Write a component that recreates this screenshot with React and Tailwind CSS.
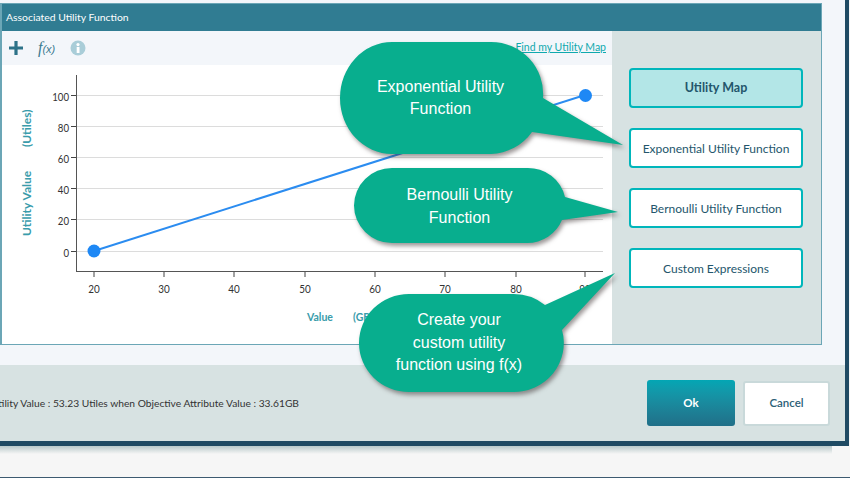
const font = { fontFamily: 'Lato, sans-serif' };

const yTicks = [
    { label: "100", y: 95.5 },
    { label: "80", y: 126.5 },
    { label: "60", y: 157.5 },
    { label: "40", y: 188.5 },
    { label: "20", y: 219.5 },
    { label: "0", y: 251.5 },
];

const xTicks = [
    { label: "20", x: 94 },
    { label: "30", x: 164 },
    { label: "40", x: 234 },
    { label: "50", x: 305 },
    { label: "60", x: 375 },
    { label: "70", x: 445 },
    { label: "80", x: 516 },
    { label: "90", x: 585 },
];

function Chart() {
    return (
        <svg width="610" height="279" viewBox="2 65 610 279" className="block" fontFamily="Lato, sans-serif">
            {yTicks.map((t) => (
                <g key={t.label}>
                    <line x1="77" x2="603" y1={t.y} y2={t.y} stroke="#dcdcdc" />
                    <line x1="71" x2="76" y1={t.y} y2={t.y} stroke="#444" />
                    <text
                        x="69"
                        y={t.y + 5}
                        fontSize="12"
                        textAnchor="end"
                        fill="#333"
                        textLength={t.label.length * 5.6}
                        lengthAdjust="spacingAndGlyphs"
                    >
                        {t.label}
                    </text>
                </g>
            ))}
            <line x1="76.5" x2="76.5" y1="75" y2="271" stroke="#555" />
            <line x1="76" x2="603" y1="271.5" y2="271.5" stroke="#555" />
            {xTicks.map((t) => (
                <g key={t.label}>
                    <line x1={t.x} x2={t.x} y1="272" y2="277" stroke="#444" />
                    <text
                        x={t.x}
                        y="293"
                        fontSize="12"
                        textAnchor="middle"
                        fill="#333"
                        textLength="11.5"
                        lengthAdjust="spacingAndGlyphs"
                    >
                        {t.label}
                    </text>
                </g>
            ))}
            <line x1="94" y1="251" x2="585" y2="95" stroke="#2b8cf0" strokeWidth="2" />
            <circle cx="94" cy="251" r="6.5" fill="#1e88f5" />
            <circle cx="585.5" cy="95.5" r="6.5" fill="#1e88f5" />
            <g fill="#3a9cab" fontWeight="700">
                <text x="307" y="321" fontSize="10.5">Value</text>
                <text x="353" y="321" fontSize="10.5">(GB)</text>
                <text transform="translate(31 236) rotate(-90)" fontSize="12">Utility Value</text>
                <text transform="translate(31 147) rotate(-90)" fontSize="12">(Utiles)</text>
            </g>
        </svg>
    );
}

function SideButton({ label, active }) {
    return (
        <button
            className={
                active
                    ? "w-[174px] h-[40px] pt-[1px] rounded border-2 border-[#00b6bb] bg-[#b3e6e7] text-[12.5px] font-bold text-[#23566c]"
                    : "w-[174px] h-[40px] pt-[1px] rounded border-2 border-[#00b6bb] bg-white text-[12px] text-[#23566c]"
            }
        >
            {label}
        </button>
    );
}

function Callouts() {
    return (
        <>
            <svg width="850" height="478" viewBox="0 0 850 478" className="absolute left-0 top-0 drop-shadow-[2px_3px_2px_rgba(60,50,50,0.5)]">
                <path
                    fill="#08ae8e"
                    d="M392 42 H491 A52 52 0 0 1 543 98 L623 145 L532 132 A52 52 0 0 1 491 154 H392 A52 56 0 0 1 392 42 Z"
                />
                <path
                    fill="#08ae8e"
                    d="M392 168 H527 A38 37 0 0 1 565 197 L618 212 L562 220 A38 37 0 0 1 527 243 H392 A38 37.5 0 0 1 392 168 Z"
                />
                <path
                    fill="#08ae8e"
                    d="M409 294 H512 A50 50 0 0 1 545 305 L615 273 L562 330 A50 49 0 0 1 512 392 H409 A50 49 0 0 1 409 294 Z"
                />
            </svg>
            <div className="absolute left-[339px] top-[76px] w-[203px] text-center text-[16px] leading-[22px] text-white font-['Liberation_Sans',sans-serif]">
                Exponential Utility
                <br />
                Function
            </div>
            <div className="absolute left-[354px] top-[183px] w-[211px] text-center text-[16px] leading-[23px] text-white font-['Liberation_Sans',sans-serif]">
                Bernoulli Utility
                <br />
                Function
            </div>
            <div className="absolute left-[359px] top-[309px] w-[200px] text-center text-[16px] leading-[22.5px] text-white font-['Liberation_Sans',sans-serif]">
                Create your
                <br />
                custom utility
                <br />
                function using f(x)
            </div>
        </>
    );
}

export default function App() {
    return (
        <div className="relative w-[850px] h-[478px] overflow-hidden bg-[#f6f6f6]" style={font}>
            {/* MODAL */}
            <div className="w-[849px] h-[446px] flex flex-col pt-[3px] bg-[#f3f6fa] border-r-4 border-b-[5px] border-[#1f4a63]">
                <div className="w-[822px] h-[342px] flex flex-col shrink-0 border border-l-2 border-[#6ba6b6]">
                    <div className="h-[27px] shrink-0 flex items-center pl-[4px] bg-[#307c92] text-[10.4px] text-white">
                        Associated Utility Function
                    </div>
                    <div className="flex-1 flex min-h-0">
                        <div className="w-[610px] flex flex-col">
                            {/* TOOLBAR */}
                            <div className="h-[34px] shrink-0 flex items-center justify-between pl-[6px] pr-[6px] bg-[#f3f6fa]">
                                <div className="flex items-center">
                                    <svg width="16" height="16" viewBox="0 0 16 16">
                                        <path d="M8 1v14M1 8h14" stroke="#2d7288" strokeWidth="3.2" />
                                    </svg>
                                    <span className="ml-[14px] text-[16px] italic text-[#3b7b90] font-['Liberation_Serif',serif]">
                                        f<span className="text-[11px] font-['Liberation_Sans',sans-serif]">(x)</span>
                                    </span>
                                    <svg width="16" height="16" viewBox="0 0 16 16" className="ml-[15px]">
                                        <circle cx="8" cy="8" r="7.5" fill="#a9cdd8" />
                                        <rect x="6.7" y="7" width="2.8" height="6" fill="#fff" />
                                        <circle cx="8" cy="4.6" r="1.6" fill="#fff" />
                                    </svg>
                                </div>
                                <a className="text-[10.5px] text-[#0fa9ae] underline">Find my Utility Map</a>
                            </div>
                            <div className="flex-1 bg-white">
                                <Chart />
                            </div>
                        </div>
                        {/* RIGHT PANEL */}
                        <div className="flex-1 flex flex-col items-start gap-[20px] pt-[37px] pl-[17px] bg-[#d7e2e2]">
                            <SideButton label="Utility Map" active />
                            <SideButton label="Exponential Utility Function" />
                            <SideButton label="Bernoulli Utility Function" />
                            <SideButton label="Custom Expressions" />
                        </div>
                    </div>
                </div>
                {/* FOOTER */}
                <div className="mt-auto h-[76px] shrink-0 flex items-center justify-between bg-[#d7e2e2] pr-[15px]">
                    <div className="w-[299px] pt-[1px] flex justify-end overflow-hidden whitespace-nowrap text-[10.25px] text-[#333]">
                        Utility Value : 53.23 Utiles when Objective Attribute Value : 33.61GB
                    </div>
                    <div className="flex items-center gap-[8px]">
                        <button className="w-[88px] h-[46px] rounded-[3px] bg-gradient-to-b from-[#03a6b4] to-[#206f88] text-[11.5px] font-bold text-white">
                            Ok
                        </button>
                        <button className="w-[87px] h-[45px] rounded-[3px] border-2 border-[#c9d9da] bg-white text-[11.5px] font-semibold text-[#2b6076]">
                            Cancel
                        </button>
                    </div>
                </div>
            </div>
            <div className="w-[832px] h-[8px] bg-gradient-to-b from-[#b9c9ca] to-[#f6f6f6]" />
            <div className="absolute left-0 bottom-0 w-full h-px bg-[#3d5a70]" />
            <Callouts />
        </div>
    );
}
